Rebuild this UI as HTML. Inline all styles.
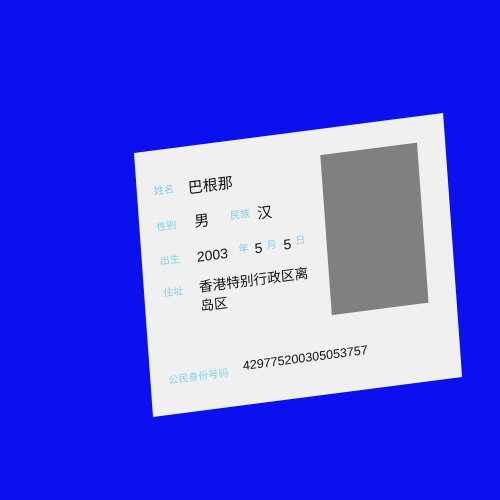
<!DOCTYPE html>
<html><head><meta charset="utf-8"><style>
html,body{margin:0;padding:0;width:500px;height:500px;background:#0a10ee;overflow:hidden}
#card{position:absolute;left:0;top:0;width:310px;height:264px;background:#f0f0f0;transform-origin:0 0;transform:matrix(0.997,-0.129,0.072,1,134,153);font-family:"Liberation Sans","Noto Sans CJK SC",sans-serif}
.l{position:absolute;font-size:10px;color:#7fd3ea;line-height:12px;white-space:nowrap}
.v{position:absolute;font-size:14px;color:#111;line-height:17px;white-space:nowrap}
#photo{position:absolute;left:185px;top:26px;width:97px;height:160px;background:#808080}
</style></head><body>
<div id="card">
<div id="photo"></div>
<div class="l" style="left:17px;top:36px">姓名</div>
<div class="v" style="left:51px;top:34px;font-size:15px">巴根那</div>
<div class="l" style="left:17px;top:72px">性别</div>
<div class="v" style="left:55px;top:68px;font-size:15px">男</div>
<div class="l" style="left:91px;top:70px">民族</div>
<div class="v" style="left:118px;top:68px;font-size:15px">汉</div>
<div class="l" style="left:18px;top:106px">出生</div>
<div class="v" style="left:55px;top:103px;font-size:14px">2003</div>
<div class="l" style="left:97px;top:104px">年</div>
<div class="v" style="left:113px;top:102px;font-size:14px">5</div>
<div class="l" style="left:125px;top:104px">月</div>
<div class="v" style="left:142px;top:102px;font-size:14px">5</div>
<div class="l" style="left:154px;top:103px">日</div>
<div class="l" style="left:19px;top:138px">住址</div>
<div class="v" style="left:55px;top:132px;width:125px;white-space:normal;line-height:19px;font-size:13.7px">香港特别行政区离<br>岛区</div>
<div class="l" style="left:18px;top:225px">公民身份号码</div>
<div class="v" style="left:93px;top:217px;font-size:12.5px">429775200305053757</div>
</div>
</body></html>
